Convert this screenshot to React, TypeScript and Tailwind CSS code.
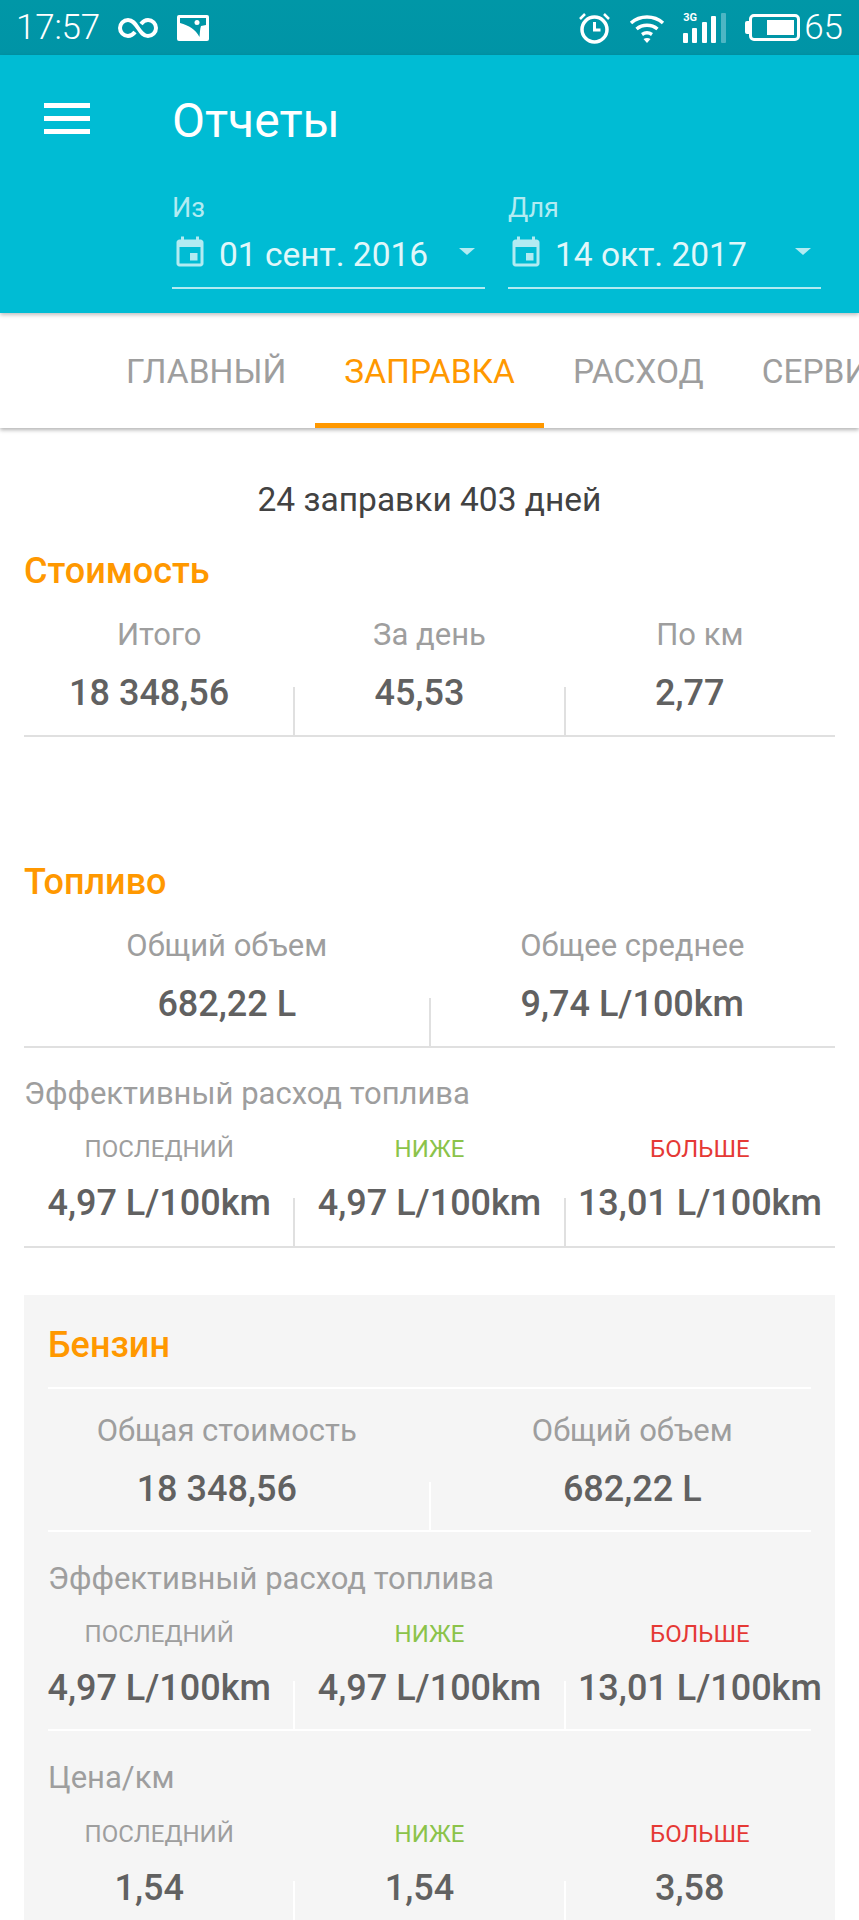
const Calendar = () => (
  <svg viewBox="0 0 24 24" className="w-[36px] h-[36px] fill-[#b2ebf2] shrink-0">
    <path d="M17 12h-5v5h5v-5zM16 1v2H8V1H6v2H5c-1.11 0-1.99.9-1.99 2L3 19c0 1.1.89 2 2 2h14c1.1 0 2-.9 2-2V5c0-1.1-.9-2-2-2h-1V1h-2zm3 18H5V8h14v11z" />
  </svg>
);

const StatusBar = () => (
  <div className="h-[55px] bg-gradient-to-b from-[#0097a7] to-[#0094a6] flex items-center pl-[16px] pr-[16px] text-white">
    <span className="text-[35px] leading-[52px] font-light tracking-[-0.2px]">17:57</span>
    {/* infinity */}
    <svg viewBox="0 0 40 22" className="ml-[18px] w-[40px] h-[22px] fill-none stroke-white stroke-[4]">
      <path d="M20 11c-3-4.500-5.500-8-10-8a8 8 0 0 0 0 16c3.500 0 5.500-2 7-4M20 11c3 4.500 5.500 8 10 8a8 8 0 0 0 0-16c-3.500 0-5.500 2-7 4" />
    </svg>
    {/* picture */}
    <svg viewBox="0 0 32 26" className="ml-[19px] w-[32px] h-[26px]">
      <rect width="32" height="26" rx="2" fill="#fff" />
      <path d="M3 3h26v7l-5 1c-1 3-1 6-1.500 11-2-4-5-7-8-9-3-2-7-4-11.500-5z" fill="#0096a6" />
      <circle cx="20" cy="7.500" r="2.500" fill="#fff" />
    </svg>
    <div className="flex-1" />
    {/* alarm */}
    <svg viewBox="0 0 33 32" className="w-[33px] h-[32px] fill-none stroke-white">
      <circle cx="16.500" cy="17.500" r="12.500" strokeWidth="3.500" />
      <path d="M16.500 10v8h6" strokeWidth="3" />
      <path d="M2 7l5-5M31 7l-5-5" strokeWidth="2.500" />
    </svg>
    {/* wifi */}
    <svg viewBox="0 0 36 30" className="ml-[18px] w-[36px] h-[30px] fill-none stroke-white stroke-[3.500]">
      <path d="M2 10c9-8 23-8 32 0M7.500 16c6-5 15-5 21 0M13 21.500c3-2 7-2 10 0" />
      <path d="M14.500 26c2-1.200 5-1.200 7 0L18 30z" fill="#fff" stroke="none" />
    </svg>
    {/* signal */}
    <div className="ml-[18px] relative w-[44px] h-[30px]">
      <span className="absolute left-0 top-[-1px] text-[11px] leading-[12px] font-bold">3G</span>
      <svg viewBox="0 0 44 30" className="w-[44px] h-[30px] fill-white">
        <rect x="0" y="20" width="5" height="10" rx="1" />
        <rect x="9" y="15" width="5" height="15" rx="1" />
        <rect x="19" y="9" width="5" height="21" rx="1" />
        <rect x="28" y="3" width="5" height="27" rx="1" />
        <rect x="38" y="0" width="5" height="30" rx="1" fill="#4db6c4" />
      </svg>
    </div>
    {/* battery */}
    <div className="ml-[18px] flex items-center">
      <div className="w-[4px] h-[13px] bg-white rounded-l-[2px]" />
      <div className="w-[51px] h-[27px] border-[3px] border-white rounded-[5px] flex justify-end pr-[3px] py-[3px]">
        <div className="w-[27px] bg-white" />
      </div>
    </div>
    <span className="ml-[4px] text-[35px] leading-[52px] font-light">65</span>
  </div>
);

const DateField = ({ label, value }: { label: string; value: string }) => (
  <div className="w-[313px]">
    <div className="text-[27px] leading-[36px] text-[#b2ebf2]">{label}</div>
    <div className="mt-[9px] h-[54px] border-b-2 border-[#b2ebf2] flex items-start">
      <Calendar />
      <span className="ml-[11px] text-[33.500px] leading-[40px] text-[#e0f7fa] whitespace-nowrap">{value}</span>
      <div className="ml-auto mr-[10px] mt-[13px] w-0 h-0 border-x-[8px] border-x-transparent border-t-[7px] border-t-[#b2ebf2]" />
    </div>
  </div>
);

const Header = () => (
  <div className="h-[258px] bg-[#00bcd4] flex shadow-[0_2px_4px_rgba(0,0,0,0.25)] relative z-20">
    <div className="w-[172px] pl-[44px] pt-[48px] shrink-0">
      <div className="w-[46px] h-[5px] bg-white" />
      <div className="w-[46px] h-[5px] bg-white mt-[8px]" />
      <div className="w-[46px] h-[5px] bg-white mt-[8px]" />
    </div>
    <div className="flex-1">
      <h1 className="mt-[37px] text-[48px] leading-[58px] text-white">Отчеты</h1>
      <div className="mt-[40px] flex gap-[23px]">
        <DateField label="Из" value="01 сент. 2016" />
        <DateField label="Для" value="14 окт. 2017" />
      </div>
    </div>
  </div>
);

const Tabs = () => (
  <div className="h-[115px] bg-white flex pl-[97px] overflow-hidden shadow-[0_2px_4px_rgba(0,0,0,0.3)] relative z-10 text-[33.500px] text-[#9e9e9e] whitespace-nowrap">
    <div className="px-[29px] pt-[38px] leading-[42px] shrink-0">ГЛАВНЫЙ</div>
    <div className="px-[29px] pt-[38px] leading-[42px] shrink-0 text-[#ff9800] border-b-[5px] border-[#ff9800]">ЗАПРАВКА</div>
    <div className="px-[29px] pt-[38px] leading-[42px] shrink-0">РАСХОД</div>
    <div className="px-[29px] pt-[38px] leading-[42px] shrink-0">СЕРВИС</div>
  </div>
);

type Stat = { label: string; value: string; tone?: string; shift?: boolean };

const toneClass = (tone?: string) =>
  tone === "green" ? "text-[#8bc34a]" : tone === "red" ? "text-[#e53935]" : "text-[#9e9e9e]";

// small = uppercase labels and a shorter row; shift puts the value a little left of the label centre
const StatRow = ({
  items,
  small,
  inBox,
}: {
  items: Stat[];
  small?: boolean;
  inBox?: boolean;
}) => {
  const dividerClass = inBox ? "bg-white" : "bg-[#e0e0e0]";
  const heightClass = small ? (inBox ? "h-[109px]" : "h-[111px]") : inBox ? "h-[119px]" : "h-[120px]";
  return (
    <div>
      <div className={items.length === 3 ? "grid grid-cols-3 mx-[24px]" : "grid grid-cols-2 mx-[24px]"}>
        {items.map((item, i) => (
          <div key={i} className={"relative text-center whitespace-nowrap " + heightClass}>
            {small ? (
              <div className={"text-[24px] leading-[28px] " + toneClass(item.tone)}>{item.label}</div>
            ) : (
              <div className="text-[31px] leading-[40px] text-[#9e9e9e]">{item.label}</div>
            )}
            <div
              className={
                "text-[36px] leading-[40px] font-medium text-[#616161] " +
                (small ? "mt-[20px] " : "mt-[18px] ") +
                (item.shift ? "pr-[20px]" : "")
              }
            >
              {item.value}
            </div>
            {i < items.length - 1 && (
              <div className={"absolute right-[-1px] bottom-0 w-[2px] h-[48px] " + dividerClass} />
            )}
          </div>
        ))}
      </div>
      <div className={"h-[2px] " + dividerClass + (inBox ? " mx-[48px]" : " mx-[24px]")} />
    </div>
  );
};

const SectionTitle = ({ children }: { children: string }) => (
  <h2 className="text-[36px] leading-[40px] font-medium text-[#ff9800]">{children}</h2>
);

const Caption = ({ children }: { children: string }) => (
  <div className="text-[31px] leading-[40px] text-[#9e9e9e]">{children}</div>
);

const range = (a: string, b: string, c: string, shift?: boolean): Stat[] => [
  { label: "ПОСЛЕДНИЙ", value: a, shift },
  { label: "НИЖЕ", value: b, tone: "green", shift },
  { label: "БОЛЬШЕ", value: c, tone: "red", shift },
];

export default function App() {
  return (
    <div className="w-[859px] h-[1920px] overflow-hidden bg-white font-['Roboto',sans-serif]">
      <StatusBar />
      <Header />
      <Tabs />

      <div className="pt-[52px] text-center text-[33.500px] leading-[40px] text-[#424242]">24 заправки 403 дней</div>

      <div className="mt-[31px] px-[24px]">
        <SectionTitle>Стоимость</SectionTitle>
      </div>
      <div className="mt-[24px]">
        <StatRow
          items={[
            { label: "Итого", value: "18 348,56", shift: true },
            { label: "За день", value: "45,53", shift: true },
            { label: "По км", value: "2,77", shift: true },
          ]}
        />
      </div>

      <div className="mt-[125px] px-[24px]">
        <SectionTitle>Топливо</SectionTitle>
      </div>
      <div className="mt-[24px]">
        <StatRow
          items={[
            { label: "Общий объем", value: "682,22 L" },
            { label: "Общее среднее", value: "9,74 L/100km" },
          ]}
        />
      </div>
      <div className="mt-[26px] px-[24px]">
        <Caption>Эффективный расход топлива</Caption>
      </div>
      <div className="mt-[21px]">
        <StatRow small items={range("4,97 L/100km", "4,97 L/100km", "13,01 L/100km")} />
      </div>

      <div className="mt-[47px] mx-[24px] h-[700px] bg-[#f5f5f5]">
        <div className="-mx-[24px]">
          <div className="pt-[30px] px-[48px]">
            <SectionTitle>Бензин</SectionTitle>
          </div>
          <div className="mt-[22px] mx-[48px] h-[2px] bg-white" />
          <div className="mt-[22px]">
            <StatRow
              inBox
              items={[
                { label: "Общая стоимость", value: "18 348,56", shift: true },
                { label: "Общий объем", value: "682,22 L" },
              ]}
            />
          </div>
          <div className="mt-[27px] px-[48px]">
            <Caption>Эффективный расход топлива</Caption>
          </div>
          <div className="mt-[21px]">
            <StatRow small inBox items={range("4,97 L/100km", "4,97 L/100km", "13,01 L/100km")} />
          </div>
          <div className="mt-[27px] px-[48px]">
            <Caption>Цена/км</Caption>
          </div>
          <div className="mt-[22px]">
            <StatRow small inBox items={range("1,54", "1,54", "3,58", true)} />
          </div>
        </div>
      </div>
    </div>
  );
}
